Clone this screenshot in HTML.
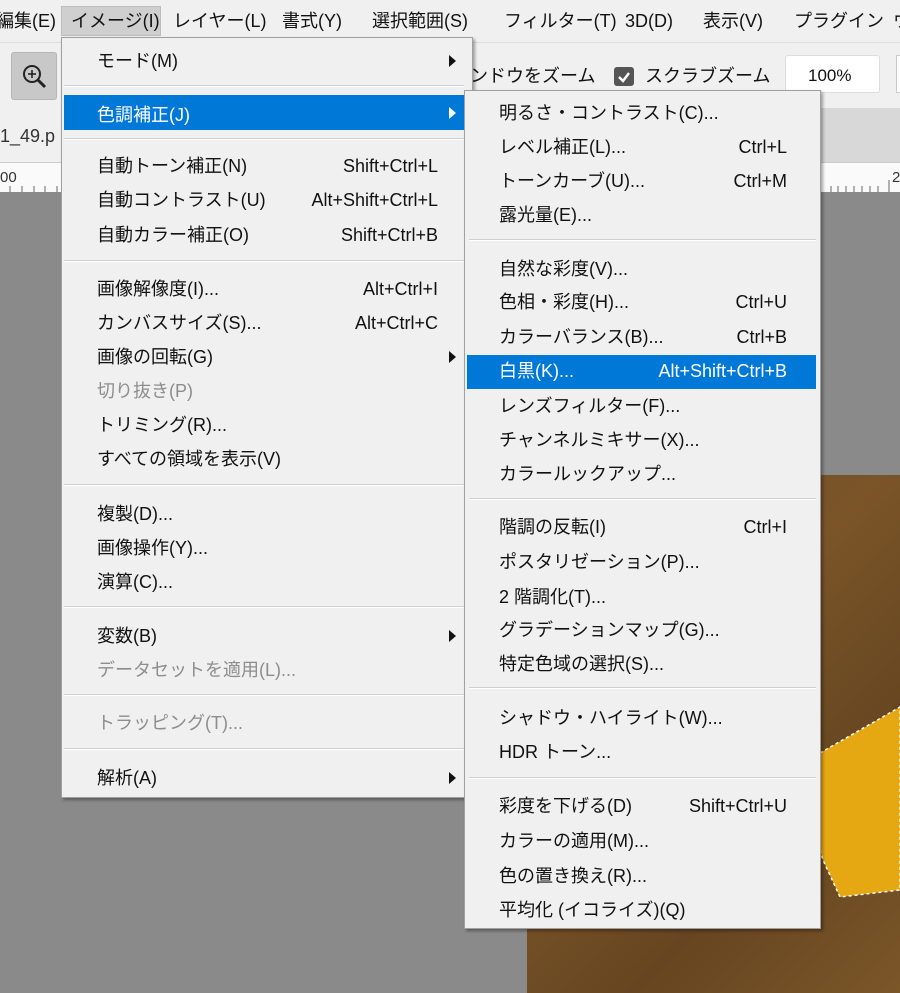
<!DOCTYPE html>
<html><head><meta charset="utf-8"><style>
*{margin:0;padding:0;box-sizing:border-box}
body{width:900px;height:993px;overflow:hidden;position:relative;background:#8a8a8a;font-family:"Liberation Sans","Noto Sans CJK JP",sans-serif;font-size:18px;color:#111}
.abs{position:absolute}
.t{position:absolute;white-space:nowrap;line-height:20px}
.menu{position:absolute;background:#f0f0f0;border:1px solid #a0a0a0;box-shadow:2px 2px 3px rgba(0,0,0,.35)}
.sep{position:absolute;height:2px;background:#d0d0d0;border-bottom:1px solid #fff}
.hl{position:absolute;background:#0078d7}
.dis{color:#8d8d8d}
.sc{position:absolute;white-space:nowrap;line-height:20px;text-align:right}
.arr{position:absolute;width:0;height:0;border-top:6px solid transparent;border-bottom:6px solid transparent;border-left:7px solid #111}
</style></head><body>
<!-- menubar -->
<div class="abs" style="left:0;top:0;width:900px;height:42px;background:#f0f0f0"></div>
<div class="abs" style="left:61px;top:6px;width:100px;height:30px;background:#cfcfcf;border:1px solid #bdbdbd"></div>
<div class="t" style="left:-4px;top:11px">編集(E)</div>
<div class="t" style="left:71px;top:11px">イメージ(I)</div>
<div class="t" style="left:173px;top:11px">レイヤー(L)</div>
<div class="t" style="left:282px;top:11px">書式(Y)</div>
<div class="t" style="left:372px;top:11px">選択範囲(S)</div>
<div class="t" style="left:504px;top:11px">フィルター(T)</div>
<div class="t" style="left:625px;top:11px">3D(D)</div>
<div class="t" style="left:703px;top:11px">表示(V)</div>
<div class="t" style="left:794px;top:11px">プラグイン</div>
<div class="t" style="left:893px;top:11px">ウ</div>
<!-- toolbar -->
<div class="abs" style="left:0;top:42px;width:900px;height:66px;background:#f0f0f0;border-top:1px solid #ddd"></div>
<div class="abs" style="left:11px;top:52px;width:46px;height:48px;background:#c8c8c8;border:1px solid #b5b5b5;border-radius:3px"></div>
<svg class="abs" style="left:20px;top:62px" width="30" height="30"><circle cx="12" cy="12" r="8" fill="none" stroke="#222" stroke-width="2"/><line x1="18" y1="18" x2="25" y2="25" stroke="#222" stroke-width="3"/><line x1="8" y1="12" x2="16" y2="12" stroke="#222" stroke-width="1.6"/><line x1="12" y1="8" x2="12" y2="16" stroke="#222" stroke-width="1.6"/></svg>
<div class="t" style="left:470px;top:66px">ンドウをズーム</div>
<div class="abs" style="left:614px;top:67px;width:20px;height:19px;background:#555;border-radius:3px"></div>
<svg class="abs" style="left:614px;top:67px" width="20" height="19"><path d="M5 10 L9 14 L15 6" fill="none" stroke="#fff" stroke-width="2.4"/></svg>
<div class="t" style="left:645px;top:66px">スクラブズーム</div>
<div class="abs" style="left:785px;top:55px;width:95px;height:38px;background:#fff;border:1px solid #ddd;border-radius:3px"></div>
<div class="t" style="left:808px;top:66px;font-size:17px">100%</div>
<div class="abs" style="left:896px;top:55px;width:10px;height:38px;background:#fff;border:1px solid #ccc"></div>
<!-- tab bar -->
<div class="abs" style="left:0;top:108px;width:900px;height:54px;background:#d8d8d8"></div>
<div class="abs" style="left:0;top:108px;width:62px;height:54px;background:#f0f0f0"></div>
<div class="t" style="left:0;top:126px;color:#333">1_49.p</div>
<!-- ruler -->
<div class="abs" style="left:0;top:162px;width:900px;height:30px;background:#fafafa;border-top:1px solid #ccc"></div>
<svg class="abs" style="left:0;top:180px" width="900" height="12">
<g stroke="#666" stroke-width="1">
<line x1="10" y1="6" x2="10" y2="12"/><line x1="22" y1="6" x2="22" y2="12"/><line x1="34" y1="6" x2="34" y2="12"/><line x1="45" y1="6" x2="45" y2="12"/><line x1="57" y1="6" x2="57" y2="12"/>
<line x1="831" y1="6" x2="831" y2="12"/><line x1="838" y1="6" x2="838" y2="12"/><line x1="846" y1="6" x2="846" y2="12"/><line x1="854" y1="6" x2="854" y2="12"/><line x1="862" y1="6" x2="862" y2="12"/><line x1="870" y1="6" x2="870" y2="12"/><line x1="878" y1="6" x2="878" y2="12"/><line x1="889" y1="-18" x2="889" y2="12"/>
</g></svg>
<div class="t" style="left:0;top:168px;font-size:15px;color:#333">00</div>
<div class="t" style="left:892px;top:168px;font-size:15px;color:#333">2</div>
<!-- image -->
<div class="abs" style="left:527px;top:475px;width:373px;height:518px;background:linear-gradient(135deg,#6b4a22,#7a5528 40%,#664520 70%,#7b5629)"></div>
<svg class="abs" style="left:800px;top:690px" width="100" height="220"><polygon points="20,63 60,40 100,17 100,200 40,207 23,170 20,160" fill="#e6a812" stroke="#fff" stroke-dasharray="3 3" stroke-width="1.5"/></svg>
<!-- main menu -->
<div class="menu" style="left:61px;top:37px;width:412px;height:761px"></div>
<div class="hl" style="left:64px;top:95px;width:400px;height:35px"></div>
<div class="sep" style="left:64px;top:85px;width:400px"></div>
<div class="sep" style="left:64px;top:138px;width:400px"></div>
<div class="sep" style="left:64px;top:260px;width:400px"></div>
<div class="sep" style="left:64px;top:484px;width:400px"></div>
<div class="sep" style="left:64px;top:606px;width:400px"></div>
<div class="sep" style="left:64px;top:694px;width:400px"></div>
<div class="sep" style="left:64px;top:748px;width:400px"></div>
<div class="t" style="left:97px;top:51px">モード(M)</div><div class="arr" style="left:449px;top:55px"></div>
<div class="t" style="left:97px;top:105px;color:#fff">色調補正(J)</div><div class="arr" style="left:449px;top:107px;border-left-color:#fff"></div>
<div class="t" style="left:97px;top:156px">自動トーン補正(N)</div><div class="sc" style="right:462px;top:156px">Shift+Ctrl+L</div>
<div class="t" style="left:97px;top:190px">自動コントラスト(U)</div><div class="sc" style="right:462px;top:190px">Alt+Shift+Ctrl+L</div>
<div class="t" style="left:97px;top:225px">自動カラー補正(O)</div><div class="sc" style="right:462px;top:225px">Shift+Ctrl+B</div>
<div class="t" style="left:97px;top:279px">画像解像度(I)...</div><div class="sc" style="right:462px;top:279px">Alt+Ctrl+I</div>
<div class="t" style="left:97px;top:313px">カンバスサイズ(S)...</div><div class="sc" style="right:462px;top:313px">Alt+Ctrl+C</div>
<div class="t" style="left:97px;top:347px">画像の回転(G)</div><div class="arr" style="left:449px;top:351px"></div>
<div class="t dis" style="left:97px;top:381px">切り抜き(P)</div>
<div class="t" style="left:97px;top:415px">トリミング(R)...</div>
<div class="t" style="left:97px;top:449px">すべての領域を表示(V)</div>
<div class="t" style="left:97px;top:504px">複製(D)...</div>
<div class="t" style="left:97px;top:538px">画像操作(Y)...</div>
<div class="t" style="left:97px;top:572px">演算(C)...</div>
<div class="t" style="left:97px;top:626px">変数(B)</div><div class="arr" style="left:449px;top:630px"></div>
<div class="t dis" style="left:97px;top:660px">データセットを適用(L)...</div>
<div class="t dis" style="left:97px;top:713px">トラッピング(T)...</div>
<div class="t" style="left:97px;top:768px">解析(A)</div><div class="arr" style="left:449px;top:772px"></div>
<!-- submenu -->
<div class="menu" style="left:464px;top:90px;width:357px;height:839px"></div>
<div class="hl" style="left:467px;top:355px;width:349px;height:34px"></div>
<div class="sep" style="left:469px;top:239px;width:347px"></div>
<div class="sep" style="left:469px;top:498px;width:347px"></div>
<div class="sep" style="left:469px;top:687px;width:347px"></div>
<div class="sep" style="left:469px;top:777px;width:347px"></div>
<div class="t" style="left:499px;top:103px">明るさ・コントラスト(C)...</div>
<div class="t" style="left:499px;top:137px">レベル補正(L)...</div><div class="sc" style="right:113px;top:137px">Ctrl+L</div>
<div class="t" style="left:499px;top:171px">トーンカーブ(U)...</div><div class="sc" style="right:113px;top:171px">Ctrl+M</div>
<div class="t" style="left:499px;top:205px">露光量(E)...</div>
<div class="t" style="left:499px;top:259px">自然な彩度(V)...</div>
<div class="t" style="left:499px;top:292px">色相・彩度(H)...</div><div class="sc" style="right:113px;top:292px">Ctrl+U</div>
<div class="t" style="left:499px;top:327px">カラーバランス(B)...</div><div class="sc" style="right:113px;top:327px">Ctrl+B</div>
<div class="t" style="left:499px;top:361px;color:#fff">白黒(K)...</div><div class="sc" style="right:113px;top:361px;color:#fff">Alt+Shift+Ctrl+B</div>
<div class="t" style="left:499px;top:396px">レンズフィルター(F)...</div>
<div class="t" style="left:499px;top:430px">チャンネルミキサー(X)...</div>
<div class="t" style="left:499px;top:464px">カラールックアップ...</div>
<div class="t" style="left:499px;top:517px">階調の反転(I)</div><div class="sc" style="right:113px;top:517px">Ctrl+I</div>
<div class="t" style="left:499px;top:552px">ポスタリゼーション(P)...</div>
<div class="t" style="left:499px;top:587px">2 階調化(T)...</div>
<div class="t" style="left:499px;top:620px">グラデーションマップ(G)...</div>
<div class="t" style="left:499px;top:654px">特定色域の選択(S)...</div>
<div class="t" style="left:499px;top:708px">シャドウ・ハイライト(W)...</div>
<div class="t" style="left:499px;top:742px">HDR トーン...</div>
<div class="t" style="left:499px;top:796px">彩度を下げる(D)</div><div class="sc" style="right:113px;top:796px">Shift+Ctrl+U</div>
<div class="t" style="left:499px;top:831px">カラーの適用(M)...</div>
<div class="t" style="left:499px;top:866px">色の置き換え(R)...</div>
<div class="t" style="left:499px;top:900px">平均化 (イコライズ)(Q)</div>
</body></html>
